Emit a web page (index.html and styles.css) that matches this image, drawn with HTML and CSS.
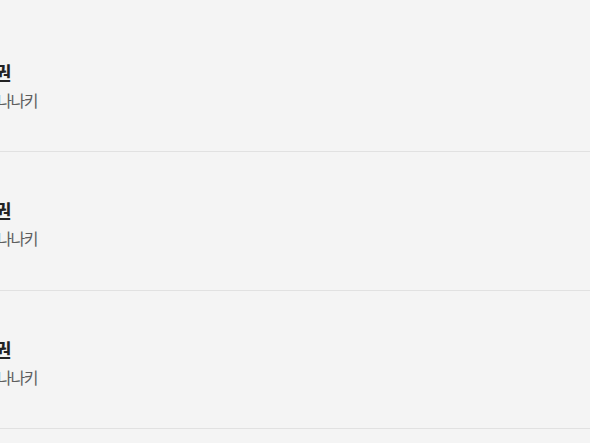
FILE: index.html
```html
<!DOCTYPE html>
<html lang="ko">
<head>
<meta charset="utf-8">
<link rel="stylesheet" href="styles.css">
</head>
<body>
<ul class="list">
  <li class="item">
    <div class="info">
      <p class="title">교환권</p>
      <p class="sub">바나나키</p>
    </div>
  </li>
  <li class="item">
    <div class="info">
      <p class="title">교환권</p>
      <p class="sub">바나나키</p>
    </div>
  </li>
  <li class="item">
    <div class="info">
      <p class="title">교환권</p>
      <p class="sub">바나나키</p>
    </div>
  </li>
  <li class="item">
    <div class="info">
      <p class="title">교환권</p>
      <p class="sub">바나나키</p>
    </div>
  </li>
</ul>
</body>
</html>
```
FILE: styles.css
```css
html, body {
  margin: 0;
  padding: 0;
  background: #f4f4f4;
  overflow: hidden;
}
.list {
  list-style: none;
  margin: 0;
  padding: 13.5px 0 0;
}
.item {
  height: 137.5px;
  border-bottom: 1px solid #e1e1e1;
  display: flex;
  align-items: center;
  overflow: hidden;
}
.info {
  display: flex;
  flex-direction: column;
  gap: 6px;
  padding-top: 7px;
}
.title {
  margin: 0 0 0 -41px;
  font-family: "Noto Sans CJK KR", sans-serif;
  font-weight: 700;
  font-size: 19px;
  line-height: 22px;
  color: #222;
  white-space: nowrap;
}
.sub {
  margin: 0 0 0 -16px;
  font-family: "Noto Sans CJK KR", sans-serif;
  font-size: 16px;
  line-height: 20px;
  letter-spacing: -1.5px;
  color: #5e5e5e;
  white-space: nowrap;
}
```
